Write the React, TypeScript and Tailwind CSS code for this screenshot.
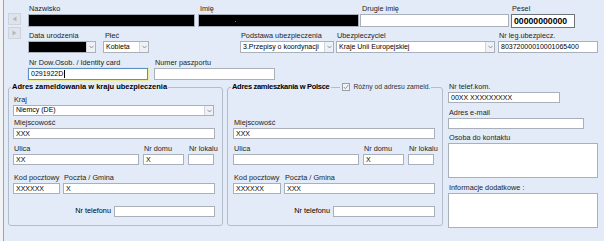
import React from "react";

type P = { children?: React.ReactNode; className?: string };

const Label = ({ children, className = "" }: P) => (
  <div className={`h-[10px] leading-[10px] whitespace-nowrap pl-[1px] text-[#1e1e1e] ${className}`}>{children}</div>
);

// plain text box
const Box = ({ children, className = "" }: P) => (
  <div
    className={`border border-[#a9b0ba] bg-white pl-[2px] text-[7px] leading-[9px] whitespace-nowrap overflow-hidden ${className}`}
  >
    {children}
  </div>
);

const Arrow = () => (
  <div className="w-[9px] h-full shrink-0 bg-[#eef1f5] border-l border-[#cfd5dd] flex items-center justify-center">
    <svg width="5" height="4" viewBox="0 0 5 4">
      <polyline points="0.5,0.8 2.5,3 4.5,0.8" fill="none" stroke="#8a8d92" strokeWidth="0.9" />
    </svg>
  </div>
);

const Combo = ({ children, className = "" }: P) => (
  <div className={`border border-[#a9b0ba] flex items-stretch text-[7px] whitespace-nowrap overflow-hidden ${className}`}>
    <div className="flex-1 pl-[2px] flex items-center">{children}</div>
    <Arrow />
  </div>
);

const NavBtn = ({ left }: { left?: boolean }) => (
  <div className="w-[13px] h-[12px] border border-[#cdd3dc] bg-[#dfe4ec] flex items-center justify-center">
    <svg width="5" height="6" viewBox="0 0 5 6">
      {left ? (
        <polygon points="4.5,0.5 4.5,5.5 0.5,3" fill="#b3b7be" />
      ) : (
        <polygon points="0.5,0.5 0.5,5.5 4.5,3" fill="#b3b7be" />
      )}
    </svg>
  </div>
);

const Check = () => (
  <div className="w-[8px] h-[8px] shrink-0 border border-[#9a9ea5] bg-[#f4f5f7] flex items-center justify-center">
    <svg width="6" height="6" viewBox="0 0 6 6">
      <polyline points="0.8,3 2.4,4.8 5.3,1" fill="none" stroke="#8f9399" strokeWidth="1" />
    </svg>
  </div>
);

export default function App() {
  return (
    <div className="w-[604px] h-[241px] overflow-hidden bg-[#e3ebf8] flex font-['Liberation_Sans',Arial,sans-serif] text-[7.3px] text-black">
      <div className="w-[4px] h-full bg-[#f1f2f4] border-r border-[#9ea4ad]" />
      <div className="flex-1 flex flex-col">
        {/* top fields */}
        <div className="flex">
          <div className="w-[24px] pl-[4px] pt-[13px] flex flex-col gap-[2px]">
            <NavBtn left />
            <NavBtn />
          </div>
          <div className="flex flex-col pt-[4px]">
            <div className="flex">
              <div className="w-[167px]">
                <Label>Nazwisko</Label>
                <div className="h-[13px] bg-black border border-[#a9b0ba]" />
              </div>
              <div className="w-[161px] ml-[3px]">
                <Label className="pl-[2px]">Imię</Label>
                <div className="h-[13px] bg-black border border-[#a9b0ba] relative">
                  <span className="absolute left-[36px] top-[6px] w-px h-px bg-[#777]" />
                </div>
              </div>
              <div className="w-[149px] ml-[1px]">
                <Label className="pl-[2px]">Drugie imię</Label>
                <Box className="h-[13px]" />
              </div>
              <div className="w-[64px] ml-[2px]">
                <Label className="pl-[1px]">Pesel</Label>
                <div className="h-[14px] border border-[#6f737a] bg-white pl-[2px] font-bold text-[8.7px] leading-[12px] whitespace-nowrap overflow-hidden">
                  00000000000
                </div>
              </div>
            </div>
            <div className="flex mt-[3px]">
              <div className="w-[68px]">
                <Label>Data urodzenia</Label>
                <Combo className="h-[12px] bg-black" />
              </div>
              <div className="w-[46px] ml-[7px]">
                <Label className="pl-[2px]">Płeć</Label>
                <Combo className="h-[12px] bg-white">Kobieta</Combo>
              </div>
              <div className="w-[94px] ml-[91px]">
                <Label>Podstawa ubezpieczenia</Label>
                <Combo className="h-[12px] bg-white">3.Przepisy o koordynacji</Combo>
              </div>
              <div className="w-[159px] ml-[2px]">
                <Label>Ubezpieczyciel</Label>
                <Combo className="h-[12px] bg-white">Kraje Unii Europejskiej</Combo>
              </div>
              <div className="w-[100px] ml-[3px]">
                <Label>Nr leg.ubezpiecz.</Label>
                <Box className="h-[12px] leading-[10px] text-[6.8px]">80372000010001065400</Box>
              </div>
            </div>
            <div className="flex mt-[5px]">
              <div className="w-[120px]">
                <Label>Nr Dow.Osob. / Identity card</Label>
                <div className="h-[12px] border border-[#5a8fc4] outline outline-1 outline-[#e9eb9a] bg-white pl-[2px] text-[7px] leading-[10px] flex items-center">
                  0291922D<span className="w-px h-[8px] bg-black ml-px" />
                </div>
              </div>
              <div className="w-[121px] ml-[6px]">
                <Label>Numer paszportu</Label>
                <Box className="h-[12px]" />
              </div>
            </div>
          </div>
        </div>

        {/* bottom groups */}
        <div className="flex mt-[2px] pl-[4px]">
          <fieldset className="w-[215px] h-[144px] min-w-0 border border-[#b3bdca] rounded-[3px] pl-[4px] pr-[7px]">
            <legend className="ml-[-2px] px-[1px] font-bold text-[7.5px] leading-[10px] whitespace-nowrap">
              Adres zameldowania w kraju ubezpieczenia
            </legend>
            <Label className="mt-[3px]">Kraj</Label>
            <Combo className="w-[201px] h-[11px] bg-white">Niemcy (DE)</Combo>
            <Label className="mt-[2px]">Miejscowość</Label>
            <Box className="w-[202px] h-[11px]">XXX</Box>
            <div className="flex mt-[5px]">
              <div className="w-[126px]">
                <Label>Ulica</Label>
                <Box className="h-[11px]">XX</Box>
              </div>
              <div className="w-[41px] ml-[4px]">
                <Label>Nr domu</Label>
                <Box className="h-[11px]">X</Box>
              </div>
              <div className="w-[26px] ml-[4px]">
                <Label>Nr lokalu</Label>
                <Box className="h-[11px]" />
              </div>
            </div>
            <div className="flex mt-[8px]">
              <div className="w-[47px]">
                <Label>Kod pocztowy</Label>
                <Box className="h-[11px]">XXXXXX</Box>
              </div>
              <div className="w-[152px] ml-[3px]">
                <Label>Poczta / Gmina</Label>
                <Box className="h-[11px]">X</Box>
              </div>
            </div>
            <div className="flex items-center mt-[12px]">
              <div className="w-[101px] pr-[3px] text-right whitespace-nowrap">Nr telefonu</div>
              <Box className="w-[101px] h-[11px]" />
            </div>
          </fieldset>

          <fieldset className="w-[216px] h-[144px] ml-[4px] min-w-0 border border-[#b3bdca] rounded-[3px] pl-[5px] pr-0">
            <legend className="ml-[-2px] px-[1px] leading-[10px] whitespace-nowrap">
              <div className="flex items-center w-max">
                <span className="font-bold text-[7.5px] tracking-[-0.3px]">Adres zamieszkania w Polsce</span>
                <span className="w-[9px] h-px bg-[#b3bdca] ml-[2px] mr-[2px]" />
                <Check />
                <span className="ml-[3px] text-[6.8px] text-[#333]">Różny od adresu zameld.</span>
              </div>
            </legend>
            <div className="h-[25px]" />
            <Label className="mt-[1px]">Miejscowość</Label>
            <Box className="w-[202px] h-[11px]">XXX</Box>
            <div className="flex mt-[5px]">
              <div className="w-[126px]">
                <Label>Ulica</Label>
                <Box className="h-[11px]" />
              </div>
              <div className="w-[41px] ml-[4px]">
                <Label>Nr domu</Label>
                <Box className="h-[11px]">X</Box>
              </div>
              <div className="w-[26px] ml-[4px]">
                <Label>Nr lokalu</Label>
                <Box className="h-[11px]" />
              </div>
            </div>
            <div className="flex mt-[8px]">
              <div className="w-[48px]">
                <Label>Kod pocztowy</Label>
                <Box className="h-[11px]">XXXXXX</Box>
              </div>
              <div className="w-[151px] ml-[3px]">
                <Label>Poczta / Gmina</Label>
                <Box className="h-[11px]">XXX</Box>
              </div>
            </div>
            <div className="flex items-center mt-[12px]">
              <div className="w-[100px] pr-[3px] text-right whitespace-nowrap">Nr telefonu</div>
              <Box className="w-[102px] h-[11px]" />
            </div>
          </fieldset>

          <div className="ml-[5px] flex flex-col">
            <Label>Nr telef.kom.</Label>
            <Box className="w-[112px] h-[11px]">00XX XXXXXXXXX</Box>
            <Label className="mt-[5px]">Adres e-mail</Label>
            <Box className="w-[136px] h-[11px]" />
            <Label className="mt-[4px]">Osoba do kontaktu</Label>
            <Box className="w-[150px] h-[35px]" />
            <Label className="mt-[5px]">Informacje dodatkowe :</Label>
            <Box className="w-[150px] h-[35px]" />
          </div>
        </div>
      </div>
    </div>
  );
}
